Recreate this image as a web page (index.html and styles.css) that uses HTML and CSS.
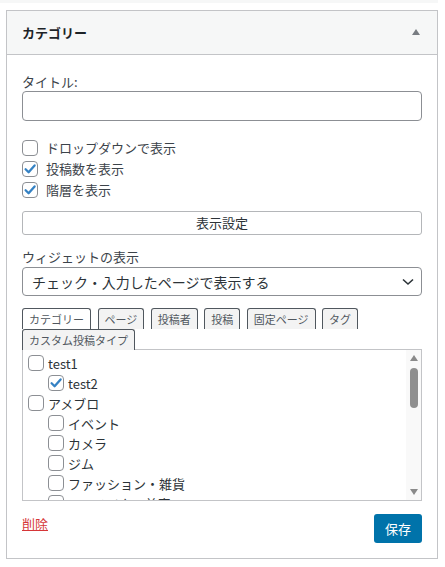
FILE: index.html
```html
<!DOCTYPE html>
<html lang="ja">
<head>
<meta charset="utf-8">
<title>カテゴリー</title>
<link rel="stylesheet" href="styles.css">
</head>
<body>
<div class="strip"></div>
<div class="widget">
  <div class="widget-top">
    <h3 class="widget-title">カテゴリー</h3>
    <svg class="toggle" width="8" height="6" viewBox="0 0 8 6"><path d="M0 6 L4 0 L8 6 Z" fill="#787c82"/></svg>
  </div>
  <div class="widget-inside">
    <label class="lbl lbl-title">タイトル:</label>
    <input class="text-input" type="text">
    <div class="checks">
      <div class="check-row"><span class="cb"></span><span>ドロップダウンで表示</span></div>
      <div class="check-row"><span class="cb"><svg width="14" height="14" viewBox="0 0 14 14"><path d="M2.6 7.2 L5.6 10.2 L11.6 3.4" fill="none" stroke="#3582c4" stroke-width="2.3" stroke-linecap="round" stroke-linejoin="round"/></svg></span><span>投稿数を表示</span></div>
      <div class="check-row"><span class="cb"><svg width="14" height="14" viewBox="0 0 14 14"><path d="M2.6 7.2 L5.6 10.2 L11.6 3.4" fill="none" stroke="#3582c4" stroke-width="2.3" stroke-linecap="round" stroke-linejoin="round"/></svg></span><span>階層を表示</span></div>
    </div>
    <button class="btn-wide" type="button">表示設定</button>
    <div class="lbl lbl-display">ウィジェットの表示</div>
    <div class="select">
      <span>チェック・入力したページで表示する</span>
      <svg width="14" height="8" viewBox="0 0 14 8"><path d="M2 1.5 L7 6 L12 1.5" fill="none" stroke="#2c3338" stroke-width="1.6"/></svg>
    </div>
    <div class="tabs">
      <span class="tab active">カテゴリー</span>
      <span class="tab">ページ</span>
      <span class="tab">投稿者</span>
      <span class="tab">投稿</span>
      <span class="tab">固定ページ</span>
      <span class="tab">タグ</span>
      <span class="tab">カスタム投稿タイプ</span>
    </div>
    <div class="list">
      <div class="list-items">
        <div class="item"><span class="cb"></span><span>test1</span></div>
        <div class="item child"><span class="cb"><svg width="14" height="14" viewBox="0 0 14 14"><path d="M2.6 7.2 L5.6 10.2 L11.6 3.4" fill="none" stroke="#3582c4" stroke-width="2.3" stroke-linecap="round" stroke-linejoin="round"/></svg></span><span>test2</span></div>
        <div class="item"><span class="cb"></span><span>アメブロ</span></div>
        <div class="item child"><span class="cb"></span><span>イベント</span></div>
        <div class="item child"><span class="cb"></span><span>カメラ</span></div>
        <div class="item child"><span class="cb"></span><span>ジム</span></div>
        <div class="item child"><span class="cb"></span><span>ファッション・雑貨</span></div>
        <div class="item child"><span class="cb"></span><span>ヘアメイク・美容</span></div>
      </div>
      <div class="scrollbar">
        <div class="sb-btn"><svg width="8" height="6" viewBox="0 0 8 6"><path d="M0 6 L4 0 L8 6 Z" fill="#8a8a8a"/></svg></div>
        <div class="sb-thumb"></div>
        <div class="sb-space"></div>
        <div class="sb-btn"><svg width="8" height="6" viewBox="0 0 8 6"><path d="M0 0 L8 0 L4 6 Z" fill="#8a8a8a"/></svg></div>
      </div>
    </div>
    <div class="actions">
      <a class="delete" href="#">削除</a>
      <button class="save" type="button">保存</button>
    </div>
  </div>
</div>
</body>
</html>
```
FILE: styles.css
```css
body {
  margin: 0;
  background: #fff;
  font-family: "Noto Sans CJK JP", "Noto Sans", sans-serif;
  font-size: 13px;
  color: #3c434a;
}

.strip {
  width: 438px;
  height: 3px;
  background: #f6f7f7;
}

.widget {
  margin: 7px 0 0 6px;
  width: 432px;
  box-sizing: border-box;
  border: 1px solid #c3c4c7;
  background: #fff;
}

.widget-top {
  height: 44px;
  box-sizing: border-box;
  background: #f6f7f7;
  border-bottom: 1px solid #c3c4c7;
  display: flex;
  align-items: center;
  justify-content: space-between;
  padding: 0 17px 0 15px;
}

.widget-title {
  margin: 0;
  font-size: 13px;
  font-weight: 600;
  line-height: 18px;
  color: #1d2327;
}

.toggle {
  display: block;
  margin-top: -2px;
}

.widget-inside {
  padding: 0 15px 15px;
}

.lbl {
  display: block;
  line-height: 18px;
}

.lbl-title {
  margin-top: 18px;
}

.lbl-display {
  margin-top: 13px;
}

.text-input {
  display: block;
  width: 100%;
  height: 30px;
  box-sizing: border-box;
  margin: 0;
  padding: 0 8px;
  border: 1px solid #8c8f94;
  border-radius: 4px;
  background: #fff;
  font: inherit;
}

.checks {
  margin-top: 16px;
}

.check-row {
  display: flex;
  align-items: center;
  height: 21px;
  gap: 8px;
  line-height: 18px;
}

.cb {
  width: 16px;
  height: 16px;
  box-sizing: border-box;
  border: 1px solid #8c8f94;
  border-radius: 4px;
  background: #fff;
  flex: none;
  display: flex;
  align-items: center;
  justify-content: center;
}

.cb svg {
  display: block;
}

.btn-wide {
  display: block;
  width: 100%;
  height: 24px;
  margin: 11px 0 0;
  padding: 0;
  border: 1px solid #b4b6b9;
  border-radius: 3px;
  background: #fff;
  font: inherit;
  line-height: 22px;
  color: #2c3338;
}

.select {
  margin-top: 1px;
  height: 29px;
  box-sizing: border-box;
  border: 1px solid #8c8f94;
  border-radius: 4px;
  display: flex;
  align-items: center;
  justify-content: space-between;
  padding: 0 6px 0 9px;
  font-size: 14px;
  color: #2c3338;
}

.select svg {
  display: block;
}

.tabs {
  margin-top: 12px;
  display: flex;
  flex-wrap: wrap;
  column-gap: 6.5px;
}

.tab {
  height: 21px;
  box-sizing: border-box;
  border: 1px solid #50575e;
  border-bottom: none;
  border-radius: 3px 3px 0 0;
  padding: 0 6px;
  font-size: 11px;
  line-height: 20px;
  background: #f3f3f3;
  color: #50575e;
}

.tab.active {
  background: #fff;
}

.list {
  margin-top: -1px;
  height: 152px;
  box-sizing: border-box;
  border: 1px solid #c3c4c7;
  display: flex;
  background: #fff;
}

.list-items {
  flex: 1;
  overflow: hidden;
  padding: 3px 0 0 5px;
}

.item {
  display: flex;
  align-items: center;
  height: 20px;
  gap: 4px;
  color: #2c3338;
  white-space: nowrap;
}

.item.child {
  padding-left: 20px;
}

.scrollbar {
  width: 15px;
  flex: none;
  background: #f9f9f9;
  display: flex;
  flex-direction: column;
  align-items: center;
}

.sb-btn {
  height: 16px;
  width: 100%;
  display: flex;
  align-items: center;
  justify-content: center;
}

.sb-btn svg {
  display: block;
}

.sb-thumb {
  width: 8px;
  height: 40px;
  margin-top: 2px;
  border-radius: 4px;
  background: #8f8f8f;
}

.sb-space {
  flex: 1;
}

.actions {
  margin-top: 13px;
  display: flex;
  justify-content: space-between;
  align-items: flex-start;
}

.delete {
  color: #d63638;
  text-decoration: underline;
  line-height: 18px;
  font-size: 13px;
  margin-top: 1px;
}

.save {
  width: 48px;
  height: 29px;
  margin: 0;
  padding: 0;
  border: none;
  border-radius: 3px;
  background: #0073aa;
  color: #fff;
  font: inherit;
  font-size: 13px;
}
```
